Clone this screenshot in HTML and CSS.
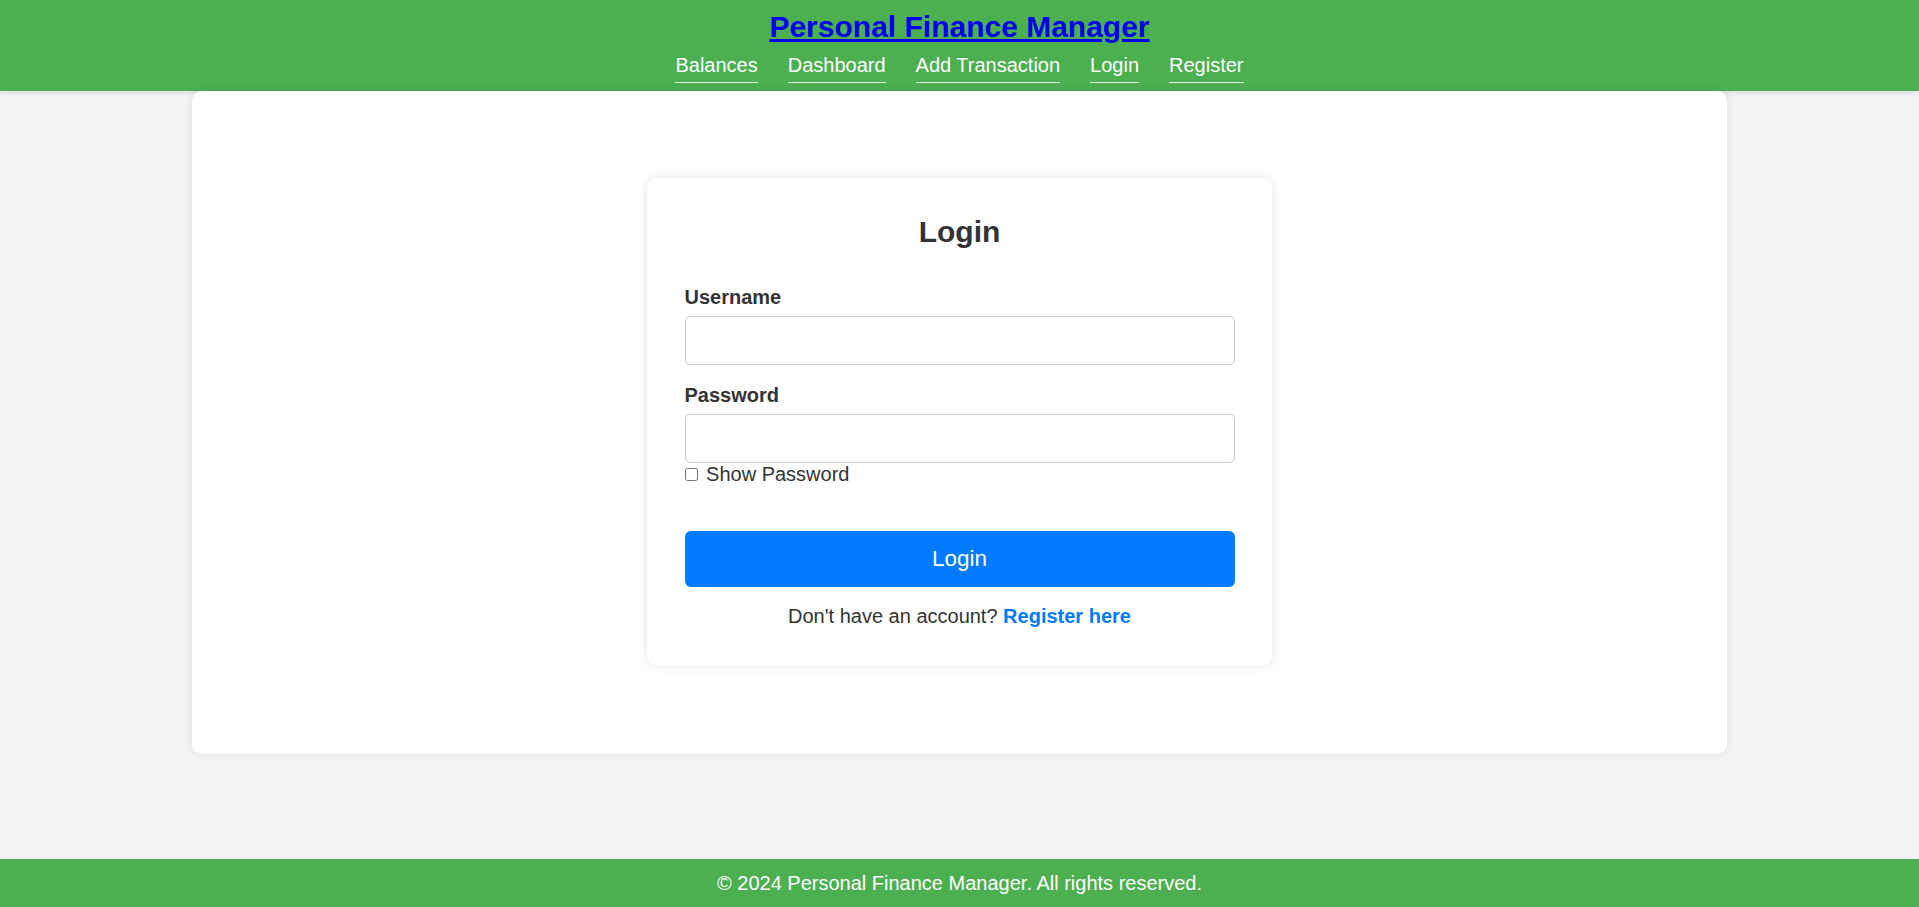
FILE: index.html
```html
<!DOCTYPE html>
<html lang="en">
<head>
    <meta charset="UTF-8">
    <meta name="viewport" content="width=device-width, initial-scale=1.0">
    <title>Login - Personal Finance Manager</title>
    <link rel="stylesheet" href="styles.css">
    <script>
        function togglePassword() {
            const field = document.getElementById('password');
            field.type = field.type === 'password' ? 'text' : 'password';
        }
    </script>
</head>
<body>
    <header class="site-header">
        <h1 class="site-title"><a href="#">Personal Finance Manager</a></h1>
        <nav class="site-nav">
            <a href="#">Balances</a>
            <a href="#">Dashboard</a>
            <a href="#">Add Transaction</a>
            <a href="#">Login</a>
            <a href="#">Register</a>
        </nav>
    </header>

    <main class="container">
        <div class="login-card">
            <h2>Login</h2>
            <form>
                <div class="form-group">
                    <label for="username">Username</label>
                    <input type="text" id="username" name="username">
                </div>
                <div class="form-group">
                    <label for="password">Password</label>
                    <input type="password" id="password" name="password">
                    <div class="show-password">
                        <input type="checkbox" id="show-password" onclick="togglePassword()"> Show Password
                    </div>
                </div>
                <button type="submit">Login</button>
            </form>
            <p class="register-link">Don't have an account? <a href="#">Register here</a></p>
        </div>
    </main>

    <footer class="site-footer">
        &copy; 2024 Personal Finance Manager. All rights reserved.
    </footer>
</body>
</html>
```

FILE: styles.css
```css
body {
    font-family: "Liberation Sans", Arial, sans-serif;
    font-size: 20px;
    margin: 0;
    background-color: #f4f4f4;
    color: #333;
    display: flex;
    flex-direction: column;
    min-height: 100vh;
}
.site-header {
    background-color: #4caf50;
    color: #fff;
    text-align: center;
    padding: 10px 0 7.5px;
    box-shadow: 0 2px 4px rgba(0, 0, 0, 0.1);
}
.site-title {
    font-size: 30px;
    margin: 0;
}
.site-title a {
    color: #0000ee;
}
.site-nav {
    display: flex;
    justify-content: center;
    gap: 30px;
    margin-top: 10px;
}
.site-nav a {
    display: inline-block;
    color: #fff;
    text-decoration: none;
    padding-bottom: 5px;
    border-bottom: 1px solid rgba(255, 255, 255, 0.85);
}
.container {
    align-self: center;
    width: 80%;
    box-sizing: border-box;
    padding: 25px;
    background-color: #fff;
    border-radius: 10px;
    box-shadow: 0 0 10px rgba(0, 0, 0, 0.1);
}
.login-card {
    width: 625px;
    box-sizing: border-box;
    margin: 62px auto 63px;
    padding: 37.5px;
    background-color: #fff;
    border-radius: 10px;
    box-shadow: 0 0 12px rgba(0, 0, 0, 0.1);
}
.login-card h2 {
    font-size: 30px;
    text-align: center;
    margin: 0 0 36.5px;
}
.form-group {
    margin-bottom: 19px;
}
.form-group label {
    display: block;
    font-weight: bold;
    margin-bottom: 7px;
}
.form-group input[type="text"],
.form-group input[type="password"] {
    display: block;
    width: 100%;
    height: 49px;
    box-sizing: border-box;
    padding: 12px;
    border: 1px solid #ccc;
    border-radius: 5px;
    font-family: inherit;
    font-size: 20px;
}
.show-password input {
    width: 13px;
    height: 13px;
    margin: 3px 3px 3px 0;
}
.login-card button {
    display: block;
    width: 100%;
    margin-top: 45px;
    padding: 15px;
    background-color: #007bff;
    color: #fff;
    border: none;
    border-radius: 6px;
    font-family: inherit;
    font-size: 22.5px;
    cursor: pointer;
}
.login-card button:hover {
    background-color: #0069d9;
}
.register-link {
    text-align: center;
    margin: 18.5px 0 0;
}
.register-link a {
    color: #007bff;
    font-weight: bold;
    text-decoration: none;
}
.site-footer {
    margin-top: auto;
    background-color: #4caf50;
    color: #fff;
    text-align: center;
    padding: 12.5px 0;
}
```
